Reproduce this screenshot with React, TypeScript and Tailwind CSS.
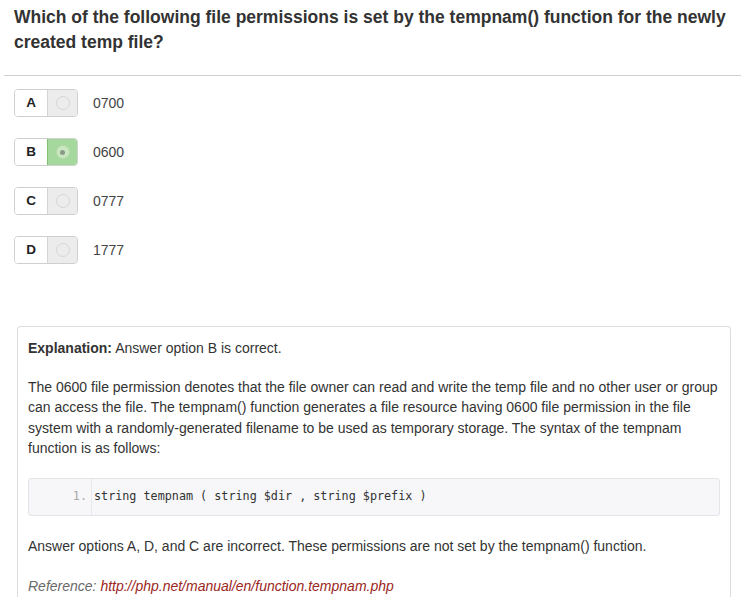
import React from "react";

const options = [
  { l: "A", v: "0700", sel: false },
  { l: "B", v: "0600", sel: true },
  { l: "C", v: "0777", sel: false },
  { l: "D", v: "1777", sel: false },
];

function Radio({ checked }: { checked: boolean }) {
  return (
    <span
      className={
        "block w-[14px] h-[14px] rounded-full border " +
        (checked
          ? "border-[#b8d8b0] bg-[#c9e8c0] flex items-center justify-center"
          : "border-[#d6d6d6] bg-[#ececec]")
      }
    >
      {checked && <span className="block w-[5px] h-[5px] rounded-full bg-[#8a9a88]" />}
    </span>
  );
}

export default function App() {
  return (
    <div className="w-[745px] h-[599px] overflow-hidden bg-white text-[#333] font-['Liberation_Sans',Arial,sans-serif]">
      <div className="px-[14px] pt-[5px] pb-[20px]">
        <h1 className="text-[17.5px] leading-[25px] font-bold text-[#333]">
          Which of the following file permissions is set by the tempnam() function for the newly created temp file?
        </h1>
      </div>
      <div className="h-px bg-[#cfcfcf] mx-[4px]" />
      <div className="pl-[14px] pt-[13px] flex flex-col gap-[21px]">
        {options.map((o) => (
          <div key={o.l} className="flex items-center h-[28px]">
            <div className="flex h-[28px] w-[64px] rounded-[4px] border border-[#cfcfcf] overflow-hidden">
              <div className="w-[32px] flex items-center justify-center bg-white text-[13.5px] font-bold text-[#222]">
                {o.l}
              </div>
              <div
                className={
                  "flex-1 flex items-center justify-center border-l " +
                  (o.sel ? "bg-[#a4d89c] border-[#80c070]" : "bg-[#ececec] border-[#d4d4d4]")
                }
              >
                <Radio checked={o.sel} />
              </div>
            </div>
            <span className="ml-[15px] text-[14px] text-[#444]">{o.v}</span>
          </div>
        ))}
      </div>
      <div className="mt-[62px] ml-[17px] mr-[14px] border border-b-0 border-[#dcdcdc] rounded-t-[4px] px-[10px] pt-[11px] text-[14px] leading-[20.5px] text-[#333]">
        <p>
          <b>Explanation:</b> Answer option B is correct.
        </p>
        <p className="mt-[18px]">
          The 0600 file permission denotes that the file owner can read and write the temp file and no other user or group can access the file. The tempnam() function generates a file resource having 0600 file permission in the file system with a randomly-generated filename to be used as temporary storage. The syntax of the tempnam function is as follows:
        </p>
        <div className="mt-[19px] flex h-[38px] rounded-[3px] border border-[#e4e4e8] bg-[#f7f7f9] font-['DejaVu_Sans_Mono',monospace] text-[11.75px]">
          <div className="w-[62px] flex items-center justify-end pr-[4px] text-[#aaa]">1.</div>
          <div className="flex items-center pl-[2px] border-l border-[#e8e8ec] text-[#333] whitespace-pre">
            {"string tempnam ( string $dir , string $prefix )"}
          </div>
        </div>
        <p className="mt-[20px]">Answer options A, D, and C are incorrect. These permissions are not set by the tempnam() function.</p>
        <p className="mt-[20px] italic text-[#6a6a6a]">
          Reference: <span className="text-[#9a2621]">http://php.net/manual/en/function.tempnam.php</span>
        </p>
      </div>
    </div>
  );
}
